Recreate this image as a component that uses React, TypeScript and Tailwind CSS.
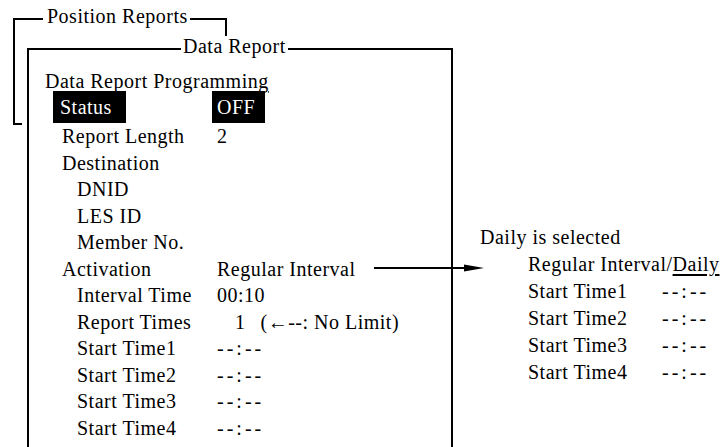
import React from "react";

const Dashes = () => <span className="tracking-[3px]">--:--</span>;

const Arrow = () => (
    <svg className="ml-[18px] shrink-0 -mt-[2px]" width="112" height="10" viewBox="0 0 112 10">
        <line x1="0" y1="5" x2="96" y2="5" stroke="#000" strokeWidth="2" />
        <polygon points="90,1.5 110,5 90,8.5" fill="#000" />
    </svg>
);

type Item = { label: string; value?: React.ReactNode; sub?: boolean };

const items: Item[] = [
    { label: "Report Length", value: "2" },
    { label: "Destination" },
    { label: "DNID", sub: true },
    { label: "LES ID", sub: true },
    { label: "Member No.", sub: true },
    {
        label: "Activation",
        value: (
            <>
                <span>Regular Interval</span>
                <Arrow />
            </>
        ),
    },
    { label: "Interval Time", value: "00:10", sub: true },
    {
        label: "Report Times",
        value: (
            <>
                <span className="ml-[18px]">1</span>
                <span className="ml-[15px]">(←--: No Limit)</span>
            </>
        ),
        sub: true,
    },
    { label: "Start Time1", value: <Dashes />, sub: true },
    { label: "Start Time2", value: <Dashes />, sub: true },
    { label: "Start Time3", value: <Dashes />, sub: true },
    { label: "Start Time4", value: <Dashes />, sub: true },
];

const Row: React.FC<Item> = ({ label, value, sub }) => (
    <div className="flex items-center h-[26.5px] leading-[26.5px] whitespace-nowrap">
        <div className={sub ? "w-[183px] shrink-0 pl-[48px]" : "w-[183px] shrink-0 pl-[33px]"}>{label}</div>
        <div className="flex items-center pl-[5px]">{value}</div>
    </div>
);

export default function App() {
    return (
        <div className="w-[727px] h-[447px] overflow-hidden bg-white text-black text-[20px] leading-[20px] tracking-[0.5px] [font-family:'Liberation_Serif',serif]">
            {/* back frame */}
            <fieldset className="min-w-0 ml-[13px] mt-[6px] w-[214px] h-[119px] border-2 border-black">
                <legend className="ml-[28px] pl-[4px] pr-[2px] pb-[6px] leading-[20px] whitespace-nowrap">Position Reports</legend>
            </fieldset>

            <div className="flex items-start -mt-[89px]">
                {/* front frame */}
                <div className="relative shrink-0 ml-[22px] pl-[5px] bg-white">
                    <fieldset className="min-w-0 w-[426px] h-[420px] border-2 border-black pt-[9px]">
                        <legend className="ml-[152px] px-[2px] pb-[6px] leading-[20px] whitespace-nowrap">Data Report</legend>
                        <div className="pl-[16px] h-[20px] whitespace-nowrap">
                            Data Report Program
                            <span className="underline decoration-2 underline-offset-[3px]">ming</span>
                        </div>
                        <div className="flex h-[32px]">
                            <div className="w-[183px] shrink-0 pl-[24px]">
                                <div className="w-[73px] h-full bg-black text-white pl-[7px] flex items-center">Status</div>
                            </div>
                            <div className="w-[53px] h-full bg-black text-white pl-[5px] flex items-center">OFF</div>
                        </div>
                        {items.map((it) => (
                            <Row key={it.label} {...it} />
                        ))}
                    </fieldset>
                </div>

                {/* Daily variant */}
                <div className="ml-[27px] mt-[188px] leading-[27px] whitespace-nowrap">
                    <div>Daily is selected</div>
                    <div className="pl-[48px]">
                        Regular Interval/<span className="underline decoration-2 underline-offset-[3px]">Daily</span>
                    </div>
                    {[1, 2, 3, 4].map((n) => (
                        <div key={n} className="flex pl-[48px]">
                            <span className="w-[134px] shrink-0">Start Time{n}</span>
                            <Dashes />
                        </div>
                    ))}
                </div>
            </div>
        </div>
    );
}
